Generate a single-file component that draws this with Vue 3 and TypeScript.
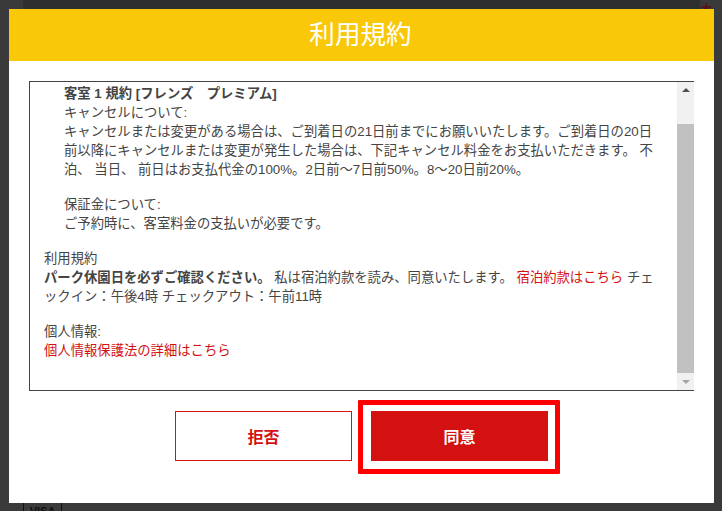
<script setup lang="ts">
const title = '利用規約'
</script>

<template>
  <div class="page">
    <div class="backdrop-top"></div>
    <svg class="mark" width="12" height="9" viewBox="0 0 12 9" aria-hidden="true">
      <path d="M6 0v9M1 4h10M6 4L2 9M6 4l4 5" stroke="#5a1214" stroke-width="1.4" fill="none" />
    </svg>
    <section class="modal">
      <header class="head">{{ title }}</header>
      <div class="body">
        <div class="terms">
          <div class="text">
            <div class="indent block">
              <div><b>客室 1 規約 [フレンズ　プレミアム]</b></div>
              <div>キャンセルについて:</div>
              <div>キャンセルまたは変更がある場合は、ご到着日の21日前までにお願いいたします。ご到着日の20日前以降にキャンセルまたは変更が発生した場合は、下記キャンセル料金をお支払いただきます。 不泊、 当日、 前日はお支払代金の100%。2日前～7日前50%。8～20日前20%。</div>
            </div>
            <div class="indent block">
              <div>保証金について:</div>
              <div>ご予約時に、客室料金の支払いが必要です。</div>
            </div>
            <div class="block">
              <div>利用規約</div>
              <div><b>パーク休園日を必ずご確認ください。</b> 私は宿泊約款を読み、同意いたします。 <span class="red">宿泊約款はこちら</span> チェックイン：午後4時 チェックアウト：午前11時</div>
            </div>
            <div class="block">
              <div>個人情報:</div>
              <div class="red">個人情報保護法の詳細はこちら</div>
            </div>
          </div>
          <div class="scrollbar">
            <div class="arrow up"></div>
            <div class="track"><div class="thumb"></div></div>
            <div class="arrow down"></div>
          </div>
        </div>
        <div class="actions">
          <button class="btn outline">拒否</button>
          <div class="agree">
            <button class="btn solid">同意</button>
            <span class="highlight"></span>
          </div>
        </div>
      </div>
    </section>
    <div class="visa">VISA</div>
  </div>
</template>

<style scoped>
.page {
  position: relative;
  width: 722px;
  height: 511px;
  overflow: hidden;
  background: #3a3a3a;
  padding: 9px 8px 8px 9px;
  box-sizing: border-box;
  font-family: "Liberation Sans", "Noto Sans CJK JP", sans-serif;
  font-size: 13.33px;
  line-height: 19px;
  color: #444;
  line-break: anywhere;
}
.backdrop-top {
  position: absolute;
  left: 23px;
  right: 22px;
  top: 0;
  height: 9px;
  background: #2f2f2f;
}
.mark {
  position: absolute;
  left: 700px;
  top: 3px;
}
.modal {
  position: relative;
  height: 494px;
  background: #fff;
  display: flex;
  flex-direction: column;
}
.head {
  height: 52px;
  flex: none;
  background: #f9c809;
  color: #fff;
  font-size: 25.6px;
  line-height: 52px;
  text-align: center;
  padding-right: 2px;
}
.body {
  padding: 20px 20px 0;
}
.terms {
  height: 310px;
  box-sizing: border-box;
  border: 1px solid #444;
  border-right: 0;
  display: flex;
}
.text {
  flex: 1;
  min-width: 0;
  padding: 2px 17px 0 14px;
}
.indent {
  padding-left: 20px;
}
.block {
  margin-bottom: 16px;
}
b {
  font-weight: 700;
}
.red {
  color: #d31111;
}
.scrollbar {
  width: 17px;
  flex: none;
  background: #f1f1f1;
  display: flex;
  flex-direction: column;
}
.arrow {
  height: 17px;
  flex: none;
  position: relative;
}
.arrow::after {
  content: "";
  position: absolute;
  left: 5px;
  width: 0;
  height: 0;
  border-left: 4px solid transparent;
  border-right: 4px solid transparent;
}
.up::after {
  top: 6px;
  border-bottom: 4px solid #505050;
}
.down::after {
  top: 7px;
  border-top: 4px solid #a3a3a3;
}
.track {
  flex: 1;
  padding-top: 25px;
}
.thumb {
  height: 249px;
  background: #c1c1c1;
}
.actions {
  display: flex;
  justify-content: center;
  gap: 19px;
  margin-top: 20px;
}
.agree {
  position: relative;
}
.btn {
  display: block;
  width: 177px;
  height: 50px;
  box-sizing: border-box;
  font-family: inherit;
  font-size: 16px;
  font-weight: 700;
  padding: 0;
}
.outline {
  background: #fff;
  border: 1px solid #d31111;
  color: #d31111;
}
.solid {
  background: #d31111;
  border: 0;
  color: #fff;
}
.highlight {
  position: absolute;
  left: -13px;
  right: -12px;
  top: -11px;
  bottom: -13px;
  border: 5px solid #ff0000;
  border-radius: 1px;
  pointer-events: none;
}
.visa {
  position: absolute;
  left: 23px;
  top: 503px;
  width: 39px;
  height: 20px;
  box-sizing: border-box;
  border: 1px solid #111;
  border-top: 0;
  color: #111;
  font: 700 11px/16px "Liberation Sans", sans-serif;
  text-align: center;
}
</style>
